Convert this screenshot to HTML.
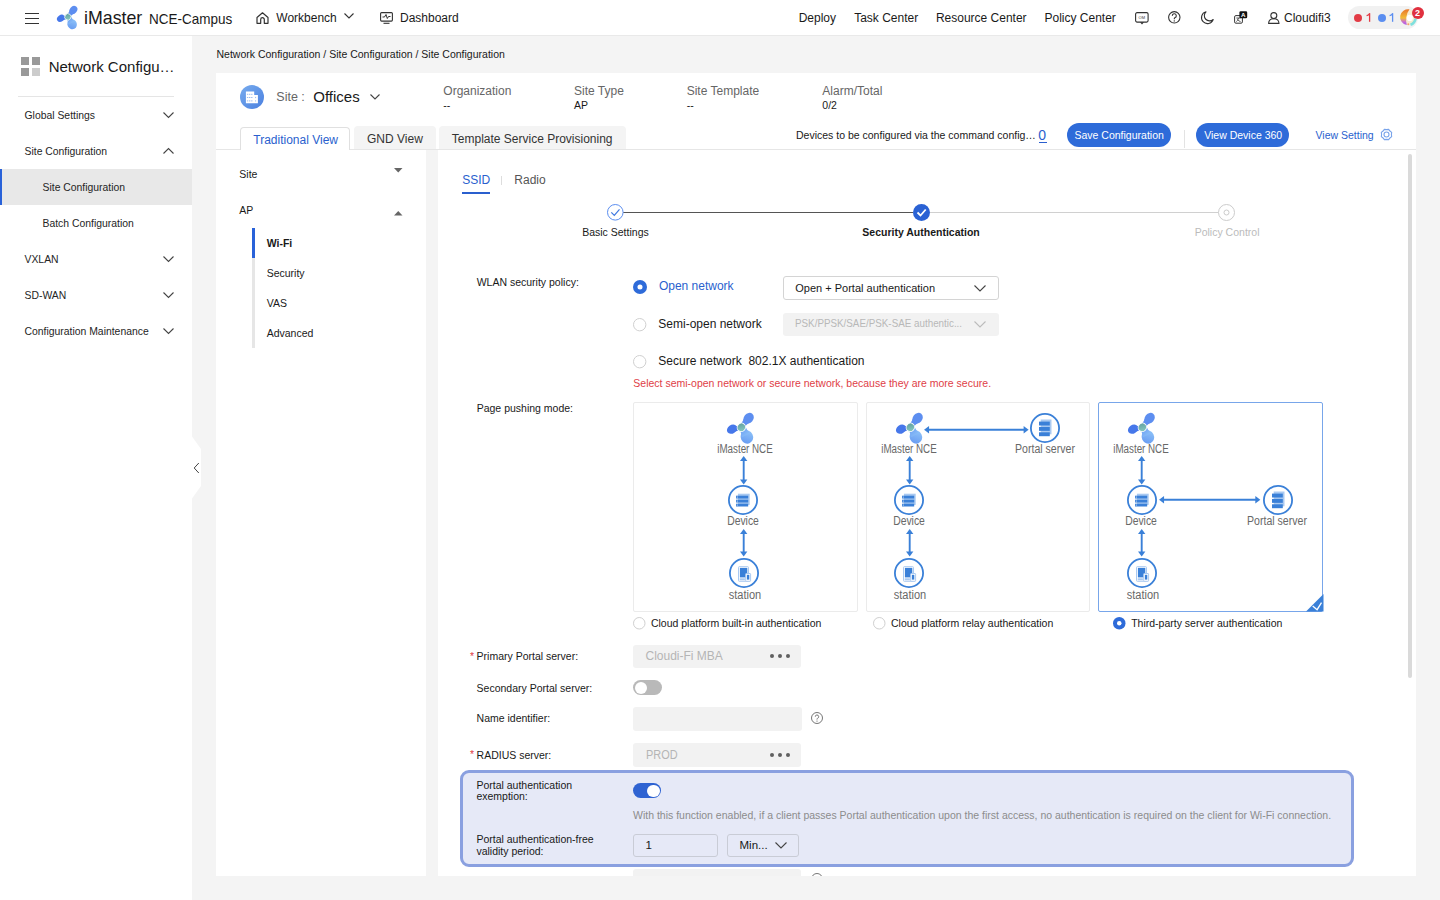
<!DOCTYPE html>
<html><head><meta charset="utf-8">
<style>
*{box-sizing:border-box;margin:0;padding:0}
html,body{width:1440px;height:900px;overflow:hidden}
body{background:#f4f4f4;font-family:"Liberation Sans",sans-serif;color:#191919;position:relative}
.a{position:absolute}
.t{position:absolute;white-space:nowrap;line-height:1}
svg{position:absolute;overflow:visible}
</style></head><body>
<div class="a" style="left:0px;top:0px;width:1440px;height:35px;background:#fff"></div>
<div class="a" style="left:0px;top:35px;width:1440px;height:1px;background:#e9e9e9"></div>
<div class="a" style="left:25px;top:12.5px;width:14px;height:1.5px;background:#333"></div>
<div class="a" style="left:25px;top:17.5px;width:14px;height:1.5px;background:#333"></div>
<div class="a" style="left:25px;top:22.5px;width:14px;height:1.5px;background:#333"></div>
<svg style="left:54px;top:3px" width="28" height="30" viewBox="0 0 28 30"><defs><linearGradient id="btop" x1="0" y1="0" x2="1" y2="1"><stop offset="0" stop-color="#6296f1"/><stop offset="1" stop-color="#93c8f9"/></linearGradient>
<linearGradient id="ctop" x1="0" y1="0" x2="1" y2="1"><stop offset="0" stop-color="#5a9a9c"/><stop offset="1" stop-color="#8fd0c4"/></linearGradient></defs>
<ellipse cx="19.4" cy="7.0" rx="4.4" ry="3.6" transform="rotate(129.3 19.4 7.0)" fill="#5d8ef0"/><path d="M16.47 6.31 Q14.96 9.73 12.53 12.40 L15.47 14.80 Q17.61 11.89 20.65 9.73 Z" fill="#5d8ef0"/>
<ellipse cx="6.8" cy="15.3" rx="4.1" ry="3.2" transform="rotate(-35.0 6.8 15.3)" fill="#4677ea"/><path d="M8.40 17.47 Q11.07 16.25 13.89 15.98 L13.31 12.42 Q10.55 13.05 7.63 12.73 Z" fill="#4677ea"/>
<ellipse cx="18.1" cy="21.2" rx="5.1" ry="4.7" transform="rotate(-116.6 18.1 21.2)" fill="url(#btop)"/><path d="M20.57 18.26 Q18.02 16.01 16.84 13.08 L12.36 15.32 Q14.00 18.02 14.26 21.41 Z" fill="url(#btop)"/>
<ellipse cx="13.9" cy="13.9" rx="3.1" ry="3.3" transform="rotate(35 13.9 13.9)" fill="url(#ctop)" stroke="#fff" stroke-width="0.7"/></svg>
<div class="t" style="left:84.00px;top:10.03px;font-size:17.8px;color:#1a1a1a;">iMaster</div>
<div class="t" style="left:148.60px;top:11.74px;font-size:14.6px;color:#1a1a1a;transform:scaleX(0.925);transform-origin:0 0;">NCE-Campus</div>
<svg style="left:256px;top:12px" width="13" height="12" viewBox="0 0 13 12"><path d="M1 5.5 L6.5 0.8 L12 5.5 V11.3 H8.3 V7.5 A1.8 1.8 0 0 0 4.7 7.5 V11.3 H1 Z" fill="none" stroke="#333" stroke-width="1.2" stroke-linejoin="round"/></svg>
<div class="t" style="left:276.30px;top:11.54px;font-size:12px;color:#1a1a1a;">Workbench</div>
<svg style="left:344px;top:13px" width="10" height="6" viewBox="0 0 10 6"><path d="M0.5 0.5 L5 5 L9.5 0.5" fill="none" stroke="#333" stroke-width="1.1"/></svg>
<svg style="left:380px;top:12px" width="13" height="12" viewBox="0 0 13 12"><rect x="0.6" y="0.6" width="11.8" height="8.5" rx="1" fill="none" stroke="#333" stroke-width="1.1"/><path d="M2.5 5 H4.5 L6 2.5 L7.3 6.5 L8.5 4.5 H10.5" fill="none" stroke="#333" stroke-width="1"/><path d="M3.5 11.3 H9.5" stroke="#333" stroke-width="1.1"/></svg>
<div class="t" style="left:400.00px;top:11.54px;font-size:12px;color:#1a1a1a;">Dashboard</div>
<div class="t" style="left:798.70px;top:11.54px;font-size:12px;color:#1a1a1a;">Deploy</div>
<div class="t" style="left:854.20px;top:11.54px;font-size:12px;color:#1a1a1a;">Task Center</div>
<div class="t" style="left:935.90px;top:11.54px;font-size:12px;color:#1a1a1a;">Resource Center</div>
<div class="t" style="left:1044.50px;top:11.54px;font-size:12px;color:#1a1a1a;">Policy Center</div>
<svg style="left:1135px;top:11.5px" width="14" height="13" viewBox="0 0 14 13"><rect x="0.6" y="0.6" width="12.5" height="9.5" rx="1.5" fill="none" stroke="#333" stroke-width="1.1"/><path d="M5 10.2 L7 12.4 L9 10.2" fill="#333"/><text x="6.8" y="7" font-size="4" text-anchor="middle" fill="#333" font-family="Liberation Sans">OM</text></svg>
<svg style="left:1167.5px;top:11.3px" width="13" height="13" viewBox="0 0 13 13"><circle cx="6.3" cy="6.3" r="5.7" fill="none" stroke="#333" stroke-width="1.1"/><path d="M4.3 4.9 A2 2 0 1 1 6.9 6.7 Q6.3 7 6.3 7.8 V8.3" fill="none" stroke="#333" stroke-width="1.1"/><circle cx="6.3" cy="9.9" r="0.7" fill="#333"/></svg>
<svg style="left:1201px;top:11.4px" width="13" height="13" viewBox="0 0 13 13"><path d="M5 0.8 A6 6 0 1 0 12.2 8.5 A5.2 5.2 0 0 1 5 0.8 Z" fill="none" stroke="#333" stroke-width="1.1" stroke-linejoin="round"/></svg>
<svg style="left:1233.5px;top:11.3px" width="14" height="14" viewBox="0 0 14 14"><rect x="0.6" y="4.6" width="7.8" height="7.6" rx="1.3" fill="#fff" stroke="#333" stroke-width="1"/><path d="M2.3 7 H6.5 M4.4 7 Q4.2 9.5 2.3 10.6 M3.4 8.6 Q4.8 10 6.6 10.7" fill="none" stroke="#333" stroke-width="0.8"/><rect x="5.4" y="0.2" width="7.8" height="7" rx="1.3" fill="#111"/><text x="9.3" y="6" font-size="6.2" font-weight="700" text-anchor="middle" fill="#fff" font-family="Liberation Sans">A</text></svg>
<svg style="left:1267.5px;top:12px" width="12" height="12" viewBox="0 0 12 12"><circle cx="5.8" cy="3.6" r="3" fill="none" stroke="#333" stroke-width="1.1"/><path d="M0.6 11.4 Q0.8 6.8 5.8 6.8 Q10.8 6.8 11 11.4 Z" fill="none" stroke="#333" stroke-width="1.1" stroke-linejoin="round"/></svg>
<div class="t" style="left:1284.00px;top:11.54px;font-size:12px;color:#1a1a1a;">Cloudifi3</div>
<div class="a" style="left:1348px;top:6px;width:70px;height:23px;background:#f1f1f1;border-radius:12px"></div>
<div class="a" style="left:1354px;top:14px;width:8px;height:8px;background:#e23b45;border-radius:50%"></div>
<svg style="left:1365.5px;top:13.2px" width="5" height="9" viewBox="0 0 5 9"><path d="M3.6 0.2 V8.8" stroke="#e23b45" stroke-width="1.3"/><path d="M3.6 0.6 Q2.6 2.2 0.6 2.7" fill="none" stroke="#e23b45" stroke-width="1.2"/></svg>
<div class="a" style="left:1377.8px;top:14px;width:8px;height:8px;background:#5b8ef0;border-radius:50%"></div>
<svg style="left:1388.6px;top:13.2px" width="5" height="9" viewBox="0 0 5 9"><path d="M3.6 0.2 V8.8" stroke="#5b8ef0" stroke-width="1.3"/><path d="M3.6 0.6 Q2.6 2.2 0.6 2.7" fill="none" stroke="#5b8ef0" stroke-width="1.2"/></svg>
<svg style="left:1400px;top:9.2px" width="16" height="17" viewBox="0 0 16 17">
<defs><linearGradient id="av" x1="0" y1="0" x2="0" y2="1"><stop offset="0" stop-color="#e8742a"/><stop offset="0.55" stop-color="#f2bd38"/><stop offset="0.8" stop-color="#c86cd8"/><stop offset="1" stop-color="#a95ae6"/></linearGradient></defs>
<circle cx="8" cy="8.2" r="8" fill="#f7ecd0"/>
<path d="M9.5 0.3 A8 8 0 0 0 6.8 16.1 Q5.6 12.5 6.3 8.5 Q7 3.5 9.5 0.3 Z" fill="url(#av)"/>
<path d="M15.6 9.5 A8 8 0 0 1 10.5 15.8" fill="none" stroke="#7fe0de" stroke-width="2.6"/>
<circle cx="8.3" cy="15.3" r="1" fill="#f4a06a"/>
<circle cx="9.8" cy="8.9" r="3.1" fill="#fff"/>
</svg>
<div class="a" style="left:1412px;top:6.6px;width:12px;height:12px;background:#e0303f;border-radius:50%"></div>
<div class="t" style="left:1414.90px;top:8.68px;font-size:9px;color:#fff;font-weight:700;">2</div>
<div class="a" style="left:0px;top:36px;width:192px;height:864px;background:#fff"></div>
<div class="a" style="left:20.5px;top:56.5px;width:8px;height:8px;background:#999"></div>
<div class="a" style="left:31.5px;top:56.5px;width:8px;height:8px;background:#999"></div>
<div class="a" style="left:20.5px;top:67.5px;width:8px;height:8px;background:#999"></div>
<div class="a" style="left:31.5px;top:67.5px;width:8px;height:8px;background:#ccc"></div>
<div class="t" style="left:48.70px;top:58.90px;font-size:15px;color:#191919;">Network Configu…</div>
<div class="a" style="left:18px;top:96px;width:156px;height:1px;background:#e5e5e5"></div>
<div class="a" style="left:0px;top:169px;width:192px;height:36px;background:#e8e8e8"></div>
<div class="a" style="left:0px;top:169px;width:2.2px;height:36px;background:#2962d9"></div>
<div class="t" style="left:24.50px;top:111.40px;font-size:10.4px;color:#252525;">Global Settings</div>
<svg style="left:163px;top:112.2px" width="11" height="6" viewBox="0 0 11 6"><path d="M0.5 0.5 L5.5 5.5 L10.5 0.5" fill="none" stroke="#444" stroke-width="1.1"/></svg>
<div class="t" style="left:24.50px;top:147.40px;font-size:10.4px;color:#252525;">Site Configuration</div>
<svg style="left:163px;top:147.7px" width="11" height="6" viewBox="0 0 11 6"><path d="M0.5 5.5 L5.5 0.5 L10.5 5.5" fill="none" stroke="#444" stroke-width="1.1"/></svg>
<div class="t" style="left:42.50px;top:183.40px;font-size:10.4px;color:#252525;">Site Configuration</div>
<div class="t" style="left:42.50px;top:219.40px;font-size:10.4px;color:#252525;">Batch Configuration</div>
<div class="t" style="left:24.50px;top:255.40px;font-size:10.4px;color:#252525;">VXLAN</div>
<svg style="left:163px;top:256.2px" width="11" height="6" viewBox="0 0 11 6"><path d="M0.5 0.5 L5.5 5.5 L10.5 0.5" fill="none" stroke="#444" stroke-width="1.1"/></svg>
<div class="t" style="left:24.50px;top:291.40px;font-size:10.4px;color:#252525;">SD-WAN</div>
<svg style="left:163px;top:292.2px" width="11" height="6" viewBox="0 0 11 6"><path d="M0.5 0.5 L5.5 5.5 L10.5 0.5" fill="none" stroke="#444" stroke-width="1.1"/></svg>
<div class="t" style="left:24.50px;top:327.40px;font-size:10.4px;color:#252525;">Configuration Maintenance</div>
<svg style="left:163px;top:328.2px" width="11" height="6" viewBox="0 0 11 6"><path d="M0.5 0.5 L5.5 5.5 L10.5 0.5" fill="none" stroke="#444" stroke-width="1.1"/></svg>
<svg style="left:192px;top:436px" width="10" height="64" viewBox="0 0 10 64"><path d="M0 0.5 L9 13 V50 L0 62.5 Z" fill="#fff"/><path d="M6.8 27 L2.2 32 L6.8 37" fill="none" stroke="#444" stroke-width="1"/></svg>
<div class="t" style="left:216.50px;top:48.81px;font-size:10.5px;color:#191919;">Network Configuration / Site Configuration / Site Configuration</div>
<div class="a" style="left:216px;top:73px;width:1200px;height:803px;background:#fff"></div>
<svg style="left:240px;top:84.5px" width="24" height="24" viewBox="0 0 24 24"><defs><linearGradient id="sg" x1="0" y1="0" x2="1" y2="1"><stop offset="0" stop-color="#78acee"/><stop offset="1" stop-color="#4a80e0"/></linearGradient></defs>
<circle cx="12" cy="12" r="12" fill="url(#sg)"/>
<path d="M5.9 6.4 H14.2 V9.9 H17.9 V18.2 H5.9 Z" fill="#fff"/>
<g fill="#9dbdf0"><rect x="6.9" y="8.8" width="1.4" height="1.0"/><rect x="9.0" y="8.8" width="1.4" height="1.0"/><rect x="11.1" y="8.8" width="1.4" height="1.0"/><rect x="6.9" y="12.0" width="1.4" height="1.0"/><rect x="9.0" y="12.0" width="1.4" height="1.0"/><rect x="11.1" y="12.0" width="1.4" height="1.0"/><rect x="6.9" y="15.4" width="1.4" height="1.0"/><rect x="9.0" y="15.4" width="1.4" height="1.0"/><rect x="11.1" y="15.4" width="1.4" height="1.0"/><rect x="15.1" y="11.9" width="1.0" height="1.2"/><rect x="15.1" y="15.3" width="1.0" height="1.2"/></g></svg>
<div class="t" style="left:276.30px;top:90.92px;font-size:12.5px;color:#666;">Site :</div>
<div class="t" style="left:313.30px;top:88.60px;font-size:15px;color:#191919;">Offices</div>
<svg style="left:370px;top:94px" width="10" height="6" viewBox="0 0 10 6"><path d="M0.5 0.5 L5 5 L9.5 0.5" fill="none" stroke="#444" stroke-width="1.1"/></svg>
<div class="t" style="left:443.30px;top:84.84px;font-size:12px;color:#666;">Organization</div>
<div class="t" style="left:443.30px;top:99.61px;font-size:10.5px;color:#191919;">--</div>
<div class="t" style="left:574.00px;top:84.84px;font-size:12px;color:#666;">Site Type</div>
<div class="t" style="left:574.00px;top:99.61px;font-size:10.5px;color:#191919;">AP</div>
<div class="t" style="left:686.70px;top:84.84px;font-size:12px;color:#666;">Site Template</div>
<div class="t" style="left:686.70px;top:99.61px;font-size:10.5px;color:#191919;">--</div>
<div class="t" style="left:822.30px;top:84.84px;font-size:12px;color:#666;">Alarm/Total</div>
<div class="t" style="left:822.30px;top:99.61px;font-size:10.5px;color:#191919;">0/2</div>
<div class="a" style="left:216px;top:149px;width:1200px;height:1px;background:#e6e6e6"></div>
<div class="a" style="left:239.8px;top:127px;width:110.7px;height:23px;background:#fff;border:1px solid #e0e0e0;border-bottom:none;border-radius:4px 4px 0 0"></div>
<div class="t" style="left:253.30px;top:134.04px;font-size:12px;color:#2a5fce;">Traditional View</div>
<div class="a" style="left:354px;top:126px;width:81.5px;height:23px;background:#f4f4f4;border-radius:4px 4px 0 0"></div>
<div class="t" style="left:367.00px;top:133.04px;font-size:12px;color:#333;">GND View</div>
<div class="a" style="left:438.5px;top:126px;width:187px;height:23px;background:#f4f4f4;border-radius:4px 4px 0 0"></div>
<div class="t" style="left:451.80px;top:133.04px;font-size:12px;color:#333;">Template Service Provisioning</div>
<div class="t" style="left:796.00px;top:130.11px;font-size:10.5px;color:#191919;">Devices to be configured via the command config…</div>
<div class="t" style="left:1038.20px;top:127.95px;font-size:14px;color:#2a5fce;">0</div>
<div class="a" style="left:1038.5px;top:141.5px;width:8.5px;height:1px;background:#2a5fce"></div>
<div class="a" style="left:1067px;top:123.2px;width:104px;height:24px;background:#2e6bd9;border-radius:12px"></div>
<div class="t" style="left:1074.50px;top:130.11px;font-size:10.5px;color:#fff;">Save Configuration</div>
<div class="a" style="left:1183.5px;top:129.5px;width:1px;height:18px;background:#e3e3e3"></div>
<div class="a" style="left:1196.2px;top:123.2px;width:93px;height:24px;background:#2e6bd9;border-radius:12px"></div>
<div class="t" style="left:1204.20px;top:130.11px;font-size:10.5px;color:#fff;">View Device 360</div>
<div class="t" style="left:1315.50px;top:130.11px;font-size:10.5px;color:#2a5fce;">View Setting</div>
<svg style="left:1379.6px;top:128.3px" width="13" height="13" viewBox="0 0 13 13"><path d="M11.40 6.50 L11.67 8.64 L9.96 9.96 L8.64 11.67 L6.50 11.40 L4.36 11.67 L3.04 9.96 L1.33 8.64 L1.60 6.50 L1.33 4.36 L3.04 3.04 L4.36 1.33 L6.50 1.60 L8.64 1.33 L9.96 3.04 L11.67 4.36 Z" fill="none" stroke="#78a3ea" stroke-width="1.1" stroke-linejoin="round"/><circle cx="6.5" cy="6.5" r="2.5" fill="none" stroke="#78a3ea" stroke-width="1.1"/></svg>
<div class="a" style="left:426px;top:150px;width:12px;height:726px;background:#f4f4f4"></div>
<div class="a" style="left:1408px;top:154px;width:4px;height:523.5px;background:#dadada;border-radius:2px"></div>
<div class="t" style="left:239.30px;top:168.91px;font-size:10.5px;color:#191919;">Site</div>
<svg style="left:393.8px;top:167.8px" width="8.5" height="4.5" viewBox="0 0 8.5 4.5"><path d="M0 0 H8.5 L4.25 4.5 Z" fill="#666"/></svg>
<div class="t" style="left:239.30px;top:204.91px;font-size:10.5px;color:#191919;">AP</div>
<svg style="left:393.8px;top:211px" width="8.5" height="4.5" viewBox="0 0 8.5 4.5"><path d="M0 4.5 H8.5 L4.25 0 Z" fill="#666"/></svg>
<div class="a" style="left:251.8px;top:228px;width:3px;height:120px;background:#e6e6e6"></div>
<div class="a" style="left:251.8px;top:228px;width:3px;height:30px;background:#2962d9"></div>
<div class="t" style="left:266.70px;top:237.81px;font-size:10.5px;color:#191919;font-weight:700;">Wi-Fi</div>
<div class="t" style="left:266.70px;top:268.21px;font-size:10.5px;color:#191919;">Security</div>
<div class="t" style="left:266.70px;top:297.91px;font-size:10.5px;color:#191919;">VAS</div>
<div class="t" style="left:266.70px;top:327.81px;font-size:10.5px;color:#191919;">Advanced</div>
<div class="t" style="left:462.20px;top:174.04px;font-size:12px;color:#2a5fce;">SSID</div>
<div class="a" style="left:462.2px;top:192.2px;width:27.6px;height:2px;background:#2a5fce"></div>
<div class="a" style="left:501.3px;top:176px;width:1px;height:9px;background:#ddd"></div>
<div class="t" style="left:514.30px;top:174.04px;font-size:12px;color:#555;">Radio</div>
<div class="a" style="left:623px;top:212px;width:290px;height:1.2px;background:#555"></div>
<div class="a" style="left:929.5px;top:212px;width:289px;height:1px;background:#d0d0d0"></div>
<svg style="left:606.8px;top:204px" width="17" height="17" viewBox="0 0 17 17"><circle cx="8.3" cy="8.3" r="7.8" fill="#fff" stroke="#5b8ef0" stroke-width="1"/><path d="M4.3 8.3 L7.3 11.3 L12.5 5.3" fill="none" stroke="#3f78e0" stroke-width="1.2"/></svg>
<svg style="left:912.5px;top:204px" width="17" height="17" viewBox="0 0 17 17"><circle cx="8.5" cy="8.5" r="8.5" fill="#2a62d4"/><path d="M4.5 8.5 L7.5 11.5 L12.7 5.5" fill="none" stroke="#fff" stroke-width="1.8"/></svg>
<svg style="left:1218.3px;top:204px" width="17" height="17" viewBox="0 0 17 17"><circle cx="8.5" cy="8.5" r="8" fill="#fff" stroke="#ccc" stroke-width="1"/><circle cx="8.5" cy="8.5" r="2.5" fill="none" stroke="#ccc" stroke-width="1"/></svg>
<div class="t" style="left:582.20px;top:226.91px;font-size:10.5px;color:#191919;">Basic Settings</div>
<div class="t" style="left:862.30px;top:226.91px;font-size:10.5px;color:#191919;font-weight:700;">Security Authentication</div>
<div class="t" style="left:1194.70px;top:226.91px;font-size:10.5px;color:#bbb;">Policy Control</div>
<div class="t" style="left:476.70px;top:277.21px;font-size:10.5px;color:#191919;">WLAN security policy:</div>
<svg style="left:633.0px;top:280.2px" width="14" height="14" viewBox="0 0 14 14"><circle cx="7.0" cy="7.0" r="7.0" fill="#2e6bd9"/><circle cx="7.0" cy="7.0" r="2.52" fill="#fff"/></svg>
<div class="t" style="left:658.90px;top:280.44px;font-size:12px;color:#2a5fce;">Open network</div>
<svg style="left:632.8px;top:317.8px" width="13.4" height="13.4" viewBox="0 0 13.4 13.4"><circle cx="6.7" cy="6.7" r="6.2" fill="#fff" stroke="#d0d0d0" stroke-width="1"/></svg>
<div class="t" style="left:658.30px;top:317.74px;font-size:12px;color:#191919;">Semi-open network</div>
<svg style="left:632.8px;top:354.90000000000003px" width="13.4" height="13.4" viewBox="0 0 13.4 13.4"><circle cx="6.7" cy="6.7" r="6.2" fill="#fff" stroke="#d0d0d0" stroke-width="1"/></svg>
<div class="t" style="left:658.30px;top:354.84px;font-size:12px;color:#191919;">Secure network</div>
<div class="t" style="left:748.40px;top:354.84px;font-size:12px;color:#191919;">802.1X authentication</div>
<div class="t" style="left:633.30px;top:378.31px;font-size:10.5px;color:#e04046;">Select semi-open network or secure network, because they are more secure.</div>
<div class="a" style="left:783.3px;top:276.3px;width:215.4px;height:23.4px;background:#fff;border:1px solid #d4d4d4;border-radius:3px"></div>
<div class="t" style="left:795.30px;top:282.59px;font-size:11px;color:#191919;">Open + Portal authentication</div>
<svg style="left:974.2px;top:285px" width="12" height="6.5" viewBox="0 0 12 6.5"><path d="M0.5 0.5 L6 6 L11.5 0.5" fill="none" stroke="#444" stroke-width="1.1"/></svg>
<div class="a" style="left:783.3px;top:312.5px;width:215.4px;height:23.4px;background:#f2f2f2;border-radius:3px"></div>
<div class="t" style="left:795.30px;top:318.19px;font-size:11px;color:#b8b8b8;transform:scaleX(0.893);transform-origin:0 0;">PSK/PPSK/SAE/PSK-SAE authentic...</div>
<svg style="left:974.2px;top:321px" width="12" height="6.5" viewBox="0 0 12 6.5"><path d="M0.5 0.5 L6 6 L11.5 0.5" fill="none" stroke="#bbb" stroke-width="1.1"/></svg>
<div class="t" style="left:476.70px;top:402.81px;font-size:10.5px;color:#191919;">Page pushing mode:</div>
<div class="a" style="left:633px;top:402px;width:224.5px;height:210px;border:1px solid #ebebeb;border-radius:2px;background:#fff"></div>
<div class="a" style="left:865.6px;top:402px;width:224.5px;height:210px;border:1px solid #ebebeb;border-radius:2px;background:#fff"></div>
<div class="a" style="left:1097.5px;top:402px;width:225.5px;height:210px;border:1px solid #78a6ea;border-radius:2px;background:#fff"></div>
<svg style="left:722.844px;top:408.644px" width="36.96" height="39.6" viewBox="0 0 28 30"><defs><linearGradient id="bc1" x1="0" y1="0" x2="1" y2="1"><stop offset="0" stop-color="#6296f1"/><stop offset="1" stop-color="#93c8f9"/></linearGradient>
<linearGradient id="cc1" x1="0" y1="0" x2="1" y2="1"><stop offset="0" stop-color="#5a9a9c"/><stop offset="1" stop-color="#8fd0c4"/></linearGradient></defs>
<ellipse cx="19.4" cy="7.0" rx="4.4" ry="3.6" transform="rotate(129.3 19.4 7.0)" fill="#5d8ef0"/><path d="M16.47 6.31 Q14.96 9.73 12.53 12.40 L15.47 14.80 Q17.61 11.89 20.65 9.73 Z" fill="#5d8ef0"/>
<ellipse cx="6.8" cy="15.3" rx="4.1" ry="3.2" transform="rotate(-35.0 6.8 15.3)" fill="#4677ea"/><path d="M8.40 17.47 Q11.07 16.25 13.89 15.98 L13.31 12.42 Q10.55 13.05 7.63 12.73 Z" fill="#4677ea"/>
<ellipse cx="18.1" cy="21.2" rx="5.1" ry="4.7" transform="rotate(-116.6 18.1 21.2)" fill="url(#bc1)"/><path d="M20.57 18.26 Q18.02 16.01 16.84 13.08 L12.36 15.32 Q14.00 18.02 14.26 21.41 Z" fill="url(#bc1)"/>
<ellipse cx="13.9" cy="13.9" rx="3.1" ry="3.3" transform="rotate(35 13.9 13.9)" fill="url(#cc1)" stroke="#fff" stroke-width="0.7"/></svg>
<div class="t" style="left:685.1px;top:443.04px;width:120px;text-align:center;font-size:12px;color:#686868;transform:scaleX(0.815) ;">iMaster NCE</div>
<svg style="left:740.3px;top:455.6px" width="7.4" height="28.5" viewBox="0 0 7.4 28.5"><path d="M3.7 3 V25.5" stroke="#3a80d8" stroke-width="1.9"/><path d="M0 5 L3.7 0 L7.4 5 Z" fill="#3a80d8"/><path d="M0 23.5 L3.7 28.5 L7.4 23.5 Z" fill="#3a80d8"/></svg>
<svg style="left:728.2px;top:485.3px" width="30" height="30" viewBox="0 0 30 30"><circle cx="15" cy="15" r="14.1" fill="#fff" stroke="#3a80d8" stroke-width="1.8"/><rect x="9.9" y="8.7" width="11.8" height="11.2" fill="#a9c9f1"/><rect x="8" y="10.7" width="12.2" height="2.8" fill="#3a80d8"/><rect x="8.8" y="11.5" width="0.9" height="1.2" fill="#cfe0f7"/><rect x="8" y="14.7" width="12.2" height="2.8" fill="#3a80d8"/><rect x="8.8" y="15.5" width="0.9" height="1.2" fill="#cfe0f7"/><rect x="8" y="18.7" width="12.2" height="2.8" fill="#3a80d8"/><rect x="8.8" y="19.5" width="0.9" height="1.2" fill="#cfe0f7"/></svg>
<div class="t" style="left:682.5px;top:514.94px;width:120px;text-align:center;font-size:12px;color:#686868;transform:scaleX(0.864) ;">Device</div>
<svg style="left:740.3px;top:529.2px" width="7.4" height="27.59999999999991" viewBox="0 0 7.4 27.59999999999991"><path d="M3.7 3 V24.59999999999991" stroke="#3a80d8" stroke-width="1.9"/><path d="M0 5 L3.7 0 L7.4 5 Z" fill="#3a80d8"/><path d="M0 22.59999999999991 L3.7 27.59999999999991 L7.4 22.59999999999991 Z" fill="#3a80d8"/></svg>
<svg style="left:729px;top:558px" width="30" height="30" viewBox="0 0 30 30"><circle cx="15" cy="15" r="14.1" fill="#fff" stroke="#3a80d8" stroke-width="1.8"/><rect x="9.5" y="8.7" width="10" height="14.6" rx="0.8" fill="#fff" stroke="#a9c9f1" stroke-width="1"/><rect x="10.9" y="9.9" width="7.4" height="9.5" fill="#3a80d8"/><rect x="10.7" y="20.3" width="5.2" height="2" fill="#a9c9f1"/><rect x="16.7" y="15.5" width="4.9" height="7.8" rx="0.6" fill="#fff" stroke="#a9c9f1" stroke-width="1"/><rect x="17.9" y="16.8" width="2.4" height="4.8" fill="#3a80d8"/></svg>
<div class="t" style="left:685.4px;top:589.24px;width:120px;text-align:center;font-size:12px;color:#686868;transform:scaleX(0.92) ;">station</div>
<svg style="left:892.044px;top:408.644px" width="36.96" height="39.6" viewBox="0 0 28 30"><defs><linearGradient id="bc2" x1="0" y1="0" x2="1" y2="1"><stop offset="0" stop-color="#6296f1"/><stop offset="1" stop-color="#93c8f9"/></linearGradient>
<linearGradient id="cc2" x1="0" y1="0" x2="1" y2="1"><stop offset="0" stop-color="#5a9a9c"/><stop offset="1" stop-color="#8fd0c4"/></linearGradient></defs>
<ellipse cx="19.4" cy="7.0" rx="4.4" ry="3.6" transform="rotate(129.3 19.4 7.0)" fill="#5d8ef0"/><path d="M16.47 6.31 Q14.96 9.73 12.53 12.40 L15.47 14.80 Q17.61 11.89 20.65 9.73 Z" fill="#5d8ef0"/>
<ellipse cx="6.8" cy="15.3" rx="4.1" ry="3.2" transform="rotate(-35.0 6.8 15.3)" fill="#4677ea"/><path d="M8.40 17.47 Q11.07 16.25 13.89 15.98 L13.31 12.42 Q10.55 13.05 7.63 12.73 Z" fill="#4677ea"/>
<ellipse cx="18.1" cy="21.2" rx="5.1" ry="4.7" transform="rotate(-116.6 18.1 21.2)" fill="url(#bc2)"/><path d="M20.57 18.26 Q18.02 16.01 16.84 13.08 L12.36 15.32 Q14.00 18.02 14.26 21.41 Z" fill="url(#bc2)"/>
<ellipse cx="13.9" cy="13.9" rx="3.1" ry="3.3" transform="rotate(35 13.9 13.9)" fill="url(#cc2)" stroke="#fff" stroke-width="0.7"/></svg>
<div class="t" style="left:849px;top:443.04px;width:120px;text-align:center;font-size:12px;color:#686868;transform:scaleX(0.815) ;">iMaster NCE</div>
<svg style="left:923.8px;top:426.0px" width="104.70000000000005" height="7.4" viewBox="0 0 104.70000000000005 7.4"><path d="M3 3.7 H101.70000000000005" stroke="#3a80d8" stroke-width="1.9"/><path d="M5 0 L0 3.7 L5 7.4 Z" fill="#3a80d8"/><path d="M99.70000000000005 0 L104.70000000000005 3.7 L99.70000000000005 7.4 Z" fill="#3a80d8"/></svg>
<svg style="left:1030.3px;top:413.4px" width="30" height="30" viewBox="0 0 30 30"><circle cx="15" cy="15" r="14.1" fill="#fff" stroke="#3a80d8" stroke-width="1.8"/><rect x="10.7" y="6.5" width="10.8" height="14.8" fill="#a9c9f1"/><rect x="9" y="8.60" width="10.8" height="3.9" fill="#3a80d8"/><rect x="9" y="13.95" width="10.8" height="3.9" fill="#3a80d8"/><rect x="9" y="19.30" width="10.8" height="3.9" fill="#3a80d8"/></svg>
<div class="t" style="left:984.9000000000001px;top:443.04px;width:120px;text-align:center;font-size:12px;color:#686868;transform:scaleX(0.88) ;">Portal server</div>
<svg style="left:905.5999999999999px;top:455.6px" width="7.4" height="28.5" viewBox="0 0 7.4 28.5"><path d="M3.7 3 V25.5" stroke="#3a80d8" stroke-width="1.9"/><path d="M0 5 L3.7 0 L7.4 5 Z" fill="#3a80d8"/><path d="M0 23.5 L3.7 28.5 L7.4 23.5 Z" fill="#3a80d8"/></svg>
<svg style="left:894px;top:485.3px" width="30" height="30" viewBox="0 0 30 30"><circle cx="15" cy="15" r="14.1" fill="#fff" stroke="#3a80d8" stroke-width="1.8"/><rect x="9.9" y="8.7" width="11.8" height="11.2" fill="#a9c9f1"/><rect x="8" y="10.7" width="12.2" height="2.8" fill="#3a80d8"/><rect x="8.8" y="11.5" width="0.9" height="1.2" fill="#cfe0f7"/><rect x="8" y="14.7" width="12.2" height="2.8" fill="#3a80d8"/><rect x="8.8" y="15.5" width="0.9" height="1.2" fill="#cfe0f7"/><rect x="8" y="18.7" width="12.2" height="2.8" fill="#3a80d8"/><rect x="8.8" y="19.5" width="0.9" height="1.2" fill="#cfe0f7"/></svg>
<div class="t" style="left:849px;top:514.94px;width:120px;text-align:center;font-size:12px;color:#686868;transform:scaleX(0.864) ;">Device</div>
<svg style="left:905.5999999999999px;top:529.2px" width="7.4" height="27.59999999999991" viewBox="0 0 7.4 27.59999999999991"><path d="M3.7 3 V24.59999999999991" stroke="#3a80d8" stroke-width="1.9"/><path d="M0 5 L3.7 0 L7.4 5 Z" fill="#3a80d8"/><path d="M0 22.59999999999991 L3.7 27.59999999999991 L7.4 22.59999999999991 Z" fill="#3a80d8"/></svg>
<svg style="left:894px;top:558px" width="30" height="30" viewBox="0 0 30 30"><circle cx="15" cy="15" r="14.1" fill="#fff" stroke="#3a80d8" stroke-width="1.8"/><rect x="9.5" y="8.7" width="10" height="14.6" rx="0.8" fill="#fff" stroke="#a9c9f1" stroke-width="1"/><rect x="10.9" y="9.9" width="7.4" height="9.5" fill="#3a80d8"/><rect x="10.7" y="20.3" width="5.2" height="2" fill="#a9c9f1"/><rect x="16.7" y="15.5" width="4.9" height="7.8" rx="0.6" fill="#fff" stroke="#a9c9f1" stroke-width="1"/><rect x="17.9" y="16.8" width="2.4" height="4.8" fill="#3a80d8"/></svg>
<div class="t" style="left:850.4px;top:589.24px;width:120px;text-align:center;font-size:12px;color:#686868;transform:scaleX(0.92) ;">station</div>
<svg style="left:1124.244px;top:408.644px" width="36.96" height="39.6" viewBox="0 0 28 30"><defs><linearGradient id="bc3" x1="0" y1="0" x2="1" y2="1"><stop offset="0" stop-color="#6296f1"/><stop offset="1" stop-color="#93c8f9"/></linearGradient>
<linearGradient id="cc3" x1="0" y1="0" x2="1" y2="1"><stop offset="0" stop-color="#5a9a9c"/><stop offset="1" stop-color="#8fd0c4"/></linearGradient></defs>
<ellipse cx="19.4" cy="7.0" rx="4.4" ry="3.6" transform="rotate(129.3 19.4 7.0)" fill="#5d8ef0"/><path d="M16.47 6.31 Q14.96 9.73 12.53 12.40 L15.47 14.80 Q17.61 11.89 20.65 9.73 Z" fill="#5d8ef0"/>
<ellipse cx="6.8" cy="15.3" rx="4.1" ry="3.2" transform="rotate(-35.0 6.8 15.3)" fill="#4677ea"/><path d="M8.40 17.47 Q11.07 16.25 13.89 15.98 L13.31 12.42 Q10.55 13.05 7.63 12.73 Z" fill="#4677ea"/>
<ellipse cx="18.1" cy="21.2" rx="5.1" ry="4.7" transform="rotate(-116.6 18.1 21.2)" fill="url(#bc3)"/><path d="M20.57 18.26 Q18.02 16.01 16.84 13.08 L12.36 15.32 Q14.00 18.02 14.26 21.41 Z" fill="url(#bc3)"/>
<ellipse cx="13.9" cy="13.9" rx="3.1" ry="3.3" transform="rotate(35 13.9 13.9)" fill="url(#cc3)" stroke="#fff" stroke-width="0.7"/></svg>
<div class="t" style="left:1081.4px;top:443.04px;width:120px;text-align:center;font-size:12px;color:#686868;transform:scaleX(0.815) ;">iMaster NCE</div>
<svg style="left:1138.1px;top:455.6px" width="7.4" height="28.5" viewBox="0 0 7.4 28.5"><path d="M3.7 3 V25.5" stroke="#3a80d8" stroke-width="1.9"/><path d="M0 5 L3.7 0 L7.4 5 Z" fill="#3a80d8"/><path d="M0 23.5 L3.7 28.5 L7.4 23.5 Z" fill="#3a80d8"/></svg>
<svg style="left:1127px;top:485.3px" width="30" height="30" viewBox="0 0 30 30"><circle cx="15" cy="15" r="14.1" fill="#fff" stroke="#3a80d8" stroke-width="1.8"/><rect x="9.9" y="8.7" width="11.8" height="11.2" fill="#a9c9f1"/><rect x="8" y="10.7" width="12.2" height="2.8" fill="#3a80d8"/><rect x="8.8" y="11.5" width="0.9" height="1.2" fill="#cfe0f7"/><rect x="8" y="14.7" width="12.2" height="2.8" fill="#3a80d8"/><rect x="8.8" y="15.5" width="0.9" height="1.2" fill="#cfe0f7"/><rect x="8" y="18.7" width="12.2" height="2.8" fill="#3a80d8"/><rect x="8.8" y="19.5" width="0.9" height="1.2" fill="#cfe0f7"/></svg>
<div class="t" style="left:1081.4px;top:514.94px;width:120px;text-align:center;font-size:12px;color:#686868;transform:scaleX(0.864) ;">Device</div>
<svg style="left:1159.3px;top:496.3px" width="101.40000000000009" height="7.4" viewBox="0 0 101.40000000000009 7.4"><path d="M3 3.7 H98.40000000000009" stroke="#3a80d8" stroke-width="1.9"/><path d="M5 0 L0 3.7 L5 7.4 Z" fill="#3a80d8"/><path d="M96.40000000000009 0 L101.40000000000009 3.7 L96.40000000000009 7.4 Z" fill="#3a80d8"/></svg>
<svg style="left:1263px;top:485.3px" width="30" height="30" viewBox="0 0 30 30"><circle cx="15" cy="15" r="14.1" fill="#fff" stroke="#3a80d8" stroke-width="1.8"/><rect x="10.7" y="6.5" width="10.8" height="14.8" fill="#a9c9f1"/><rect x="9" y="8.60" width="10.8" height="3.9" fill="#3a80d8"/><rect x="9" y="13.95" width="10.8" height="3.9" fill="#3a80d8"/><rect x="9" y="19.30" width="10.8" height="3.9" fill="#3a80d8"/></svg>
<div class="t" style="left:1217.25px;top:514.94px;width:120px;text-align:center;font-size:12px;color:#686868;transform:scaleX(0.88) ;">Portal server</div>
<svg style="left:1138.1px;top:529.2px" width="7.4" height="27.59999999999991" viewBox="0 0 7.4 27.59999999999991"><path d="M3.7 3 V24.59999999999991" stroke="#3a80d8" stroke-width="1.9"/><path d="M0 5 L3.7 0 L7.4 5 Z" fill="#3a80d8"/><path d="M0 22.59999999999991 L3.7 27.59999999999991 L7.4 22.59999999999991 Z" fill="#3a80d8"/></svg>
<svg style="left:1127px;top:558px" width="30" height="30" viewBox="0 0 30 30"><circle cx="15" cy="15" r="14.1" fill="#fff" stroke="#3a80d8" stroke-width="1.8"/><rect x="9.5" y="8.7" width="10" height="14.6" rx="0.8" fill="#fff" stroke="#a9c9f1" stroke-width="1"/><rect x="10.9" y="9.9" width="7.4" height="9.5" fill="#3a80d8"/><rect x="10.7" y="20.3" width="5.2" height="2" fill="#a9c9f1"/><rect x="16.7" y="15.5" width="4.9" height="7.8" rx="0.6" fill="#fff" stroke="#a9c9f1" stroke-width="1"/><rect x="17.9" y="16.8" width="2.4" height="4.8" fill="#3a80d8"/></svg>
<div class="t" style="left:1082.8px;top:589.24px;width:120px;text-align:center;font-size:12px;color:#686868;transform:scaleX(0.92) ;">station</div>
<svg style="left:1305.6px;top:594px" width="18" height="18" viewBox="0 0 18 18"><path d="M0 17.5 L17.5 0 V17.5 Z" fill="#3a80d8"/><path d="M6.7 11.9 L11.1 15.7 L15.5 8.7" fill="none" stroke="#fff" stroke-width="1.3"/></svg>
<svg style="left:632.75px;top:617.35px" width="12.5" height="12.5" viewBox="0 0 12.5 12.5"><circle cx="6.25" cy="6.25" r="5.75" fill="#fff" stroke="#d0d0d0" stroke-width="1"/></svg>
<div class="t" style="left:650.90px;top:618.11px;font-size:10.5px;color:#191919;">Cloud platform built-in authentication</div>
<svg style="left:872.75px;top:617.35px" width="12.5" height="12.5" viewBox="0 0 12.5 12.5"><circle cx="6.25" cy="6.25" r="5.75" fill="#fff" stroke="#d0d0d0" stroke-width="1"/></svg>
<div class="t" style="left:891.00px;top:618.11px;font-size:10.5px;color:#191919;">Cloud platform relay authentication</div>
<svg style="left:1112.65px;top:617.35px" width="12.5" height="12.5" viewBox="0 0 12.5 12.5"><circle cx="6.25" cy="6.25" r="6.25" fill="#2e6bd9"/><circle cx="6.25" cy="6.25" r="2.25" fill="#fff"/></svg>
<div class="t" style="left:1131.20px;top:618.11px;font-size:10.5px;color:#191919;">Third-party server authentication</div>
<div class="t" style="left:470.00px;top:651.11px;font-size:10.5px;color:#e04046;">*</div>
<div class="t" style="left:476.60px;top:651.11px;font-size:10.5px;color:#191919;">Primary Portal server:</div>
<div class="a" style="left:632.8px;top:644.5px;width:168px;height:23.2px;background:#f2f2f2;border-radius:3px"></div>
<div class="t" style="left:645.50px;top:650.34px;font-size:12px;color:#b5b5b5;">Cloudi-Fi MBA</div>
<div class="a" style="left:770px;top:654.2px;width:4px;height:4px;background:#606060;border-radius:50%"></div>
<div class="a" style="left:778px;top:654.2px;width:4px;height:4px;background:#606060;border-radius:50%"></div>
<div class="a" style="left:786px;top:654.2px;width:4px;height:4px;background:#606060;border-radius:50%"></div>
<div class="t" style="left:476.60px;top:682.61px;font-size:10.5px;color:#191919;">Secondary Portal server:</div>
<div class="a" style="left:633.4px;top:680.4px;width:28.5px;height:15px;background:#b9b9b9;border-radius:8px"></div>
<div class="a" style="left:634.6px;top:681.6px;width:12.6px;height:12.6px;background:#fff;border-radius:50%"></div>
<div class="t" style="left:476.60px;top:713.41px;font-size:10.5px;color:#191919;">Name identifier:</div>
<div class="a" style="left:632.8px;top:707.3px;width:169px;height:23.7px;background:#f2f2f2;border-radius:3px"></div>
<svg style="left:811px;top:711.8px" width="12" height="12" viewBox="0 0 12 12"><circle cx="6" cy="6" r="5.5" fill="none" stroke="#666" stroke-width="0.9"/><path d="M4.3 4.7 A1.7 1.7 0 1 1 6.5 6.3 Q6 6.6 6 7.3 V7.6" fill="none" stroke="#666" stroke-width="0.9"/><circle cx="6" cy="9.1" r="0.6" fill="#666"/></svg>
<div class="t" style="left:470.00px;top:749.21px;font-size:10.5px;color:#e04046;">*</div>
<div class="t" style="left:476.60px;top:749.81px;font-size:10.5px;color:#191919;">RADIUS server:</div>
<div class="a" style="left:632.8px;top:743.4px;width:168px;height:23.2px;background:#f2f2f2;border-radius:3px"></div>
<div class="t" style="left:645.50px;top:748.64px;font-size:12px;color:#b5b5b5;transform:scaleX(0.91);transform-origin:0 0;">PROD</div>
<div class="a" style="left:770px;top:753px;width:4px;height:4px;background:#606060;border-radius:50%"></div>
<div class="a" style="left:778px;top:753px;width:4px;height:4px;background:#606060;border-radius:50%"></div>
<div class="a" style="left:786px;top:753px;width:4px;height:4px;background:#606060;border-radius:50%"></div>
<div class="a" style="left:632.8px;top:869px;width:168px;height:10px;background:#f2f2f2;border-radius:3px"></div>
<svg style="left:811px;top:872.5px" width="12" height="12" viewBox="0 0 12 12"><circle cx="6" cy="6" r="5.5" fill="none" stroke="#666" stroke-width="0.9"/></svg>
<div class="a" style="left:460px;top:770px;width:894px;height:97px;background:#e6e9f7;border:3px solid #8aa0e0;border-radius:9px"></div>
<div class="t" style="left:476.40px;top:779.61px;font-size:10.5px;color:#191919;">Portal authentication</div>
<div class="t" style="left:476.40px;top:791.21px;font-size:10.5px;color:#191919;">exemption:</div>
<div class="a" style="left:632.9px;top:783.2px;width:28.2px;height:15.1px;background:#2f63d2;border-radius:8px"></div>
<div class="a" style="left:647.2px;top:784.6px;width:12.4px;height:12.4px;background:#fff;border-radius:50%"></div>
<div class="t" style="left:633.00px;top:809.71px;font-size:10.5px;color:#8c8c8c;">With this function enabled, if a client passes Portal authentication upon the first access, no authentication is required on the client for Wi-Fi connection.</div>
<div class="t" style="left:476.40px;top:834.11px;font-size:10.5px;color:#191919;">Portal authentication-free</div>
<div class="t" style="left:476.40px;top:846.01px;font-size:10.5px;color:#191919;">validity period:</div>
<div class="a" style="left:633.4px;top:833.9px;width:84.4px;height:23.2px;border:1px solid #c9ccd6;border-radius:3px"></div>
<div class="t" style="left:645.50px;top:839.77px;font-size:11.5px;color:#191919;">1</div>
<div class="a" style="left:727px;top:833.9px;width:71.8px;height:23.2px;border:1px solid #c9ccd6;border-radius:3px"></div>
<div class="t" style="left:739.50px;top:839.77px;font-size:11.5px;color:#191919;">Min...</div>
<svg style="left:774.5px;top:842.3px" width="12" height="6.5" viewBox="0 0 12 6.5"><path d="M0.5 0.5 L6 6 L11.5 0.5" fill="none" stroke="#444" stroke-width="1.1"/></svg>
<div class="a" style="left:192px;top:876px;width:1248px;height:24px;background:#f4f4f4"></div>
</body></html>
